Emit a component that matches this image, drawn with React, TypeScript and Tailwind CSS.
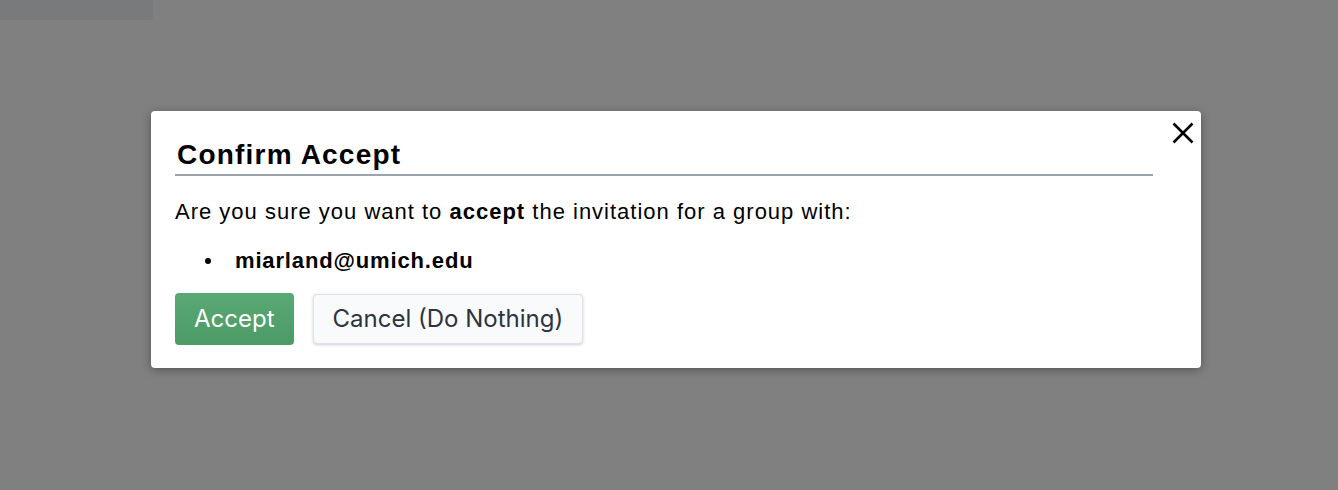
export default function App() {
  return (
    <div className="relative w-[1338px] h-[490px] bg-[#808080] overflow-hidden font-['Liberation_Sans',Arial,sans-serif]">
      <div className="w-[153px] h-[20px] bg-[#797a7c] rounded-br-[3px]" />

      <div className="pl-[151px] pt-[91px]">
        <div className="relative w-[1050px] h-[257px] bg-white rounded-[4px] shadow-[0_2px_10px_rgba(0,0,0,0.35)] px-6 pt-[27px]">
          <button className="absolute right-[7px] top-[11px] text-black">
            <svg width="22" height="22" viewBox="0 0 22 22" fill="none" stroke="currentColor" strokeWidth="2.5" strokeLinecap="butt">
              <path d="M1.5 1.5L20.5 20.5M20.5 1.5L1.5 20.5" />
            </svg>
          </button>

          <div className="mr-[24px] border-b-2 border-[#9aa3ae] pb-[2px]">
            <h2 className="text-[28px] leading-[34px] font-bold tracking-[1.2px] text-black pl-[2px]">Confirm Accept</h2>
          </div>

          <p className="mt-[23px] text-[22px] leading-[26px] tracking-[1px] text-black">
            Are you sure you want to <b>accept</b> the invitation for a group with:
          </p>

          <div className="mt-[23px] flex items-center text-[22px] leading-[26px] font-bold tracking-[0.85px] text-black">
            <span className="ml-[30px] w-[6px] h-[6px] rounded-full bg-black" />
            <span className="ml-[24px]">miarland@umich.edu</span>
          </div>

          <div className="mt-[19px] flex items-center gap-[19px] font-['Inter',sans-serif]">
            <button className="h-[52px] px-[19px] rounded-[4px] bg-gradient-to-b from-[#5aa873] to-[#4c9a66] text-white text-[24px]">
              Accept
            </button>
            <button className="h-[50px] px-[19px] rounded-[4px] bg-[#f9fafc] border border-[#dde1e8] shadow-[0_1px_3px_rgba(60,70,100,0.25)] text-[#2d3340] text-[24px]">
              Cancel (Do Nothing)
            </button>
          </div>
        </div>
      </div>
    </div>
  );
}
